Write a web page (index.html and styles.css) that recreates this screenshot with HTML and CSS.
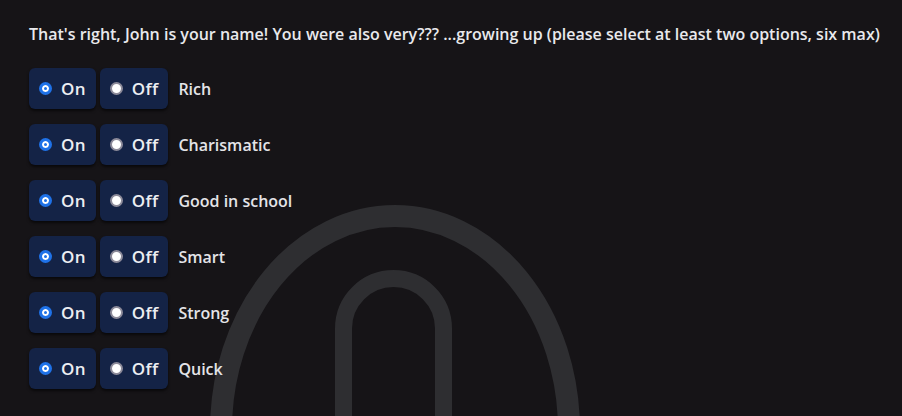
FILE: index.html
```html
<!DOCTYPE html>
<html lang="en">

<head>
    <meta charset="UTF-8">
    <meta name="viewport" content="width=device-width, initial-scale=1.0">
    <title>Growing up</title>
    <link rel="stylesheet" href="styles.css">
</head>

<body>
    <svg class="backdrop" width="902" height="416" viewBox="0 0 902 416">
        <ellipse cx="395" cy="430" rx="174" ry="214" fill="none" stroke="#2e2e31" stroke-width="22" />
        <path d="M343.5 430 V328.5 A50 50 0 0 1 443.5 328.5 V430" fill="none" stroke="#2e2e31" stroke-width="17" />
    </svg>
    <main class="quiz">
        <p class="question">That's right, John is your name! You were also very??? ...growing up (please select at least two options, six max)</p>
        <div class="options">
            <div class="option">
                <label class="toggle"><input type="radio" name="rich" checked> On</label>
                <label class="toggle"><input type="radio" name="rich"> Off</label>
                <span class="name">Rich</span>
            </div>
            <div class="option">
                <label class="toggle"><input type="radio" name="charismatic" checked> On</label>
                <label class="toggle"><input type="radio" name="charismatic"> Off</label>
                <span class="name">Charismatic</span>
            </div>
            <div class="option">
                <label class="toggle"><input type="radio" name="school" checked> On</label>
                <label class="toggle"><input type="radio" name="school"> Off</label>
                <span class="name">Good in school</span>
            </div>
            <div class="option">
                <label class="toggle"><input type="radio" name="smart" checked> On</label>
                <label class="toggle"><input type="radio" name="smart"> Off</label>
                <span class="name">Smart</span>
            </div>
            <div class="option">
                <label class="toggle"><input type="radio" name="strong" checked> On</label>
                <label class="toggle"><input type="radio" name="strong"> Off</label>
                <span class="name">Strong</span>
            </div>
            <div class="option">
                <label class="toggle"><input type="radio" name="quick" checked> On</label>
                <label class="toggle"><input type="radio" name="quick"> Off</label>
                <span class="name">Quick</span>
            </div>
        </div>
    </main>
</body>

</html>
```

FILE: styles.css
```css
* {
    margin: 0;
    padding: 0;
    box-sizing: border-box;
}

body {
    width: 902px;
    height: 416px;
    overflow: hidden;
    background-color: #161417;
    color: #e9e9ec;
    font-family: "Open Sans", "Noto Sans", sans-serif;
    font-weight: 600;
    font-size: 16px;
    position: relative;
}

.backdrop {
    position: absolute;
    left: 0;
    top: 0;
    z-index: 0;
}

.quiz {
    position: relative;
    z-index: 1;
    padding: 22px 20px 22px 29px;
}

.question {
    line-height: 24px;
    white-space: nowrap;
}

.options {
    display: flex;
    flex-direction: column;
    gap: 15px;
    margin-top: 22px;
}

.option {
    display: flex;
    align-items: center;
    gap: 4px;
}

.toggle {
    display: flex;
    align-items: center;
    gap: 9px;
    height: 41px;
    padding: 0 10px;
    border-radius: 6px;
    background-color: #142346;
    box-shadow: 0 2px 3px rgba(0, 0, 0, 0.6);
    font-size: 17px;
    letter-spacing: 0.3px;
    color: #eceef2;
}

.toggle input {
    appearance: none;
    width: 13px;
    height: 13px;
    border-radius: 50%;
    background-color: #ffffff;
    border: 2px solid #8c8a99;
    margin: 0;
}

.toggle input:checked {
    border: 3px solid #1f72e8;
    background-color: #1f72e8;
    box-shadow: inset 0 0 0 2px #ffffff;
}

.name {
    margin-left: 6px;
    color: #e4e4e8;
}
```
